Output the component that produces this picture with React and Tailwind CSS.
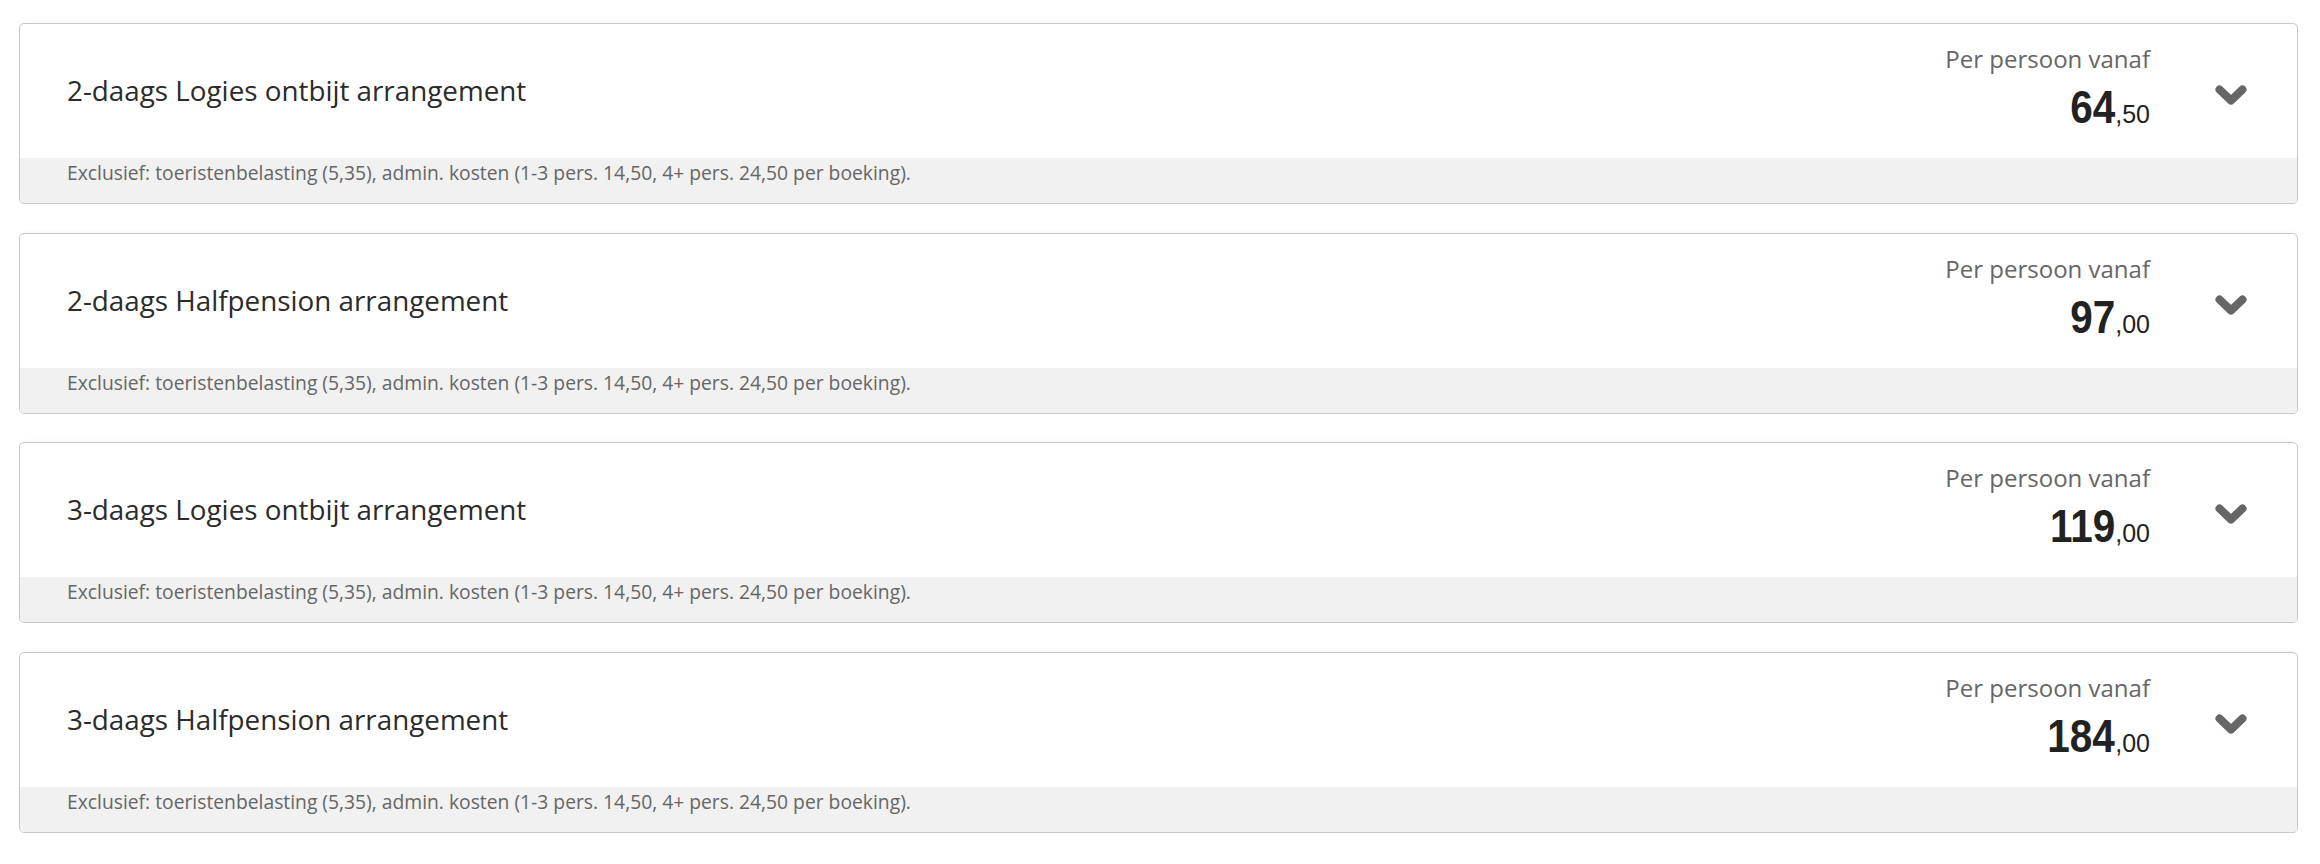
import React from 'react';

const arrangements = [
  { title: '2-daags Logies ontbijt arrangement', euros: '64', cents: '50' },
  { title: '2-daags Halfpension arrangement', euros: '97', cents: '00' },
  { title: '3-daags Logies ontbijt arrangement', euros: '119', cents: '00' },
  { title: '3-daags Halfpension arrangement', euros: '184', cents: '00' },
];

const note =
  'Exclusief: toeristenbelasting (5,35), admin. kosten (1-3 pers. 14,50, 4+ pers. 24,50 per boeking).';

const Chevron = () => (
  <svg width="32" height="21" viewBox="0 0 32 21" className="block">
    <polyline
      points="4.5,4.5 16,15.5 27.5,4.5"
      fill="none"
      stroke="#666666"
      strokeWidth="8"
      strokeLinecap="round"
      strokeLinejoin="round"
    />
  </svg>
);

const ArrangementCard = ({ title, euros, cents }) => (
  <div className="h-[181px] flex flex-col border border-[#c8c8c8] rounded-[5px] bg-white overflow-hidden shadow-[0_-4px_6px_-4px_rgba(0,0,0,0.05)]">
    <div className="h-[134px] flex items-start pl-[47px] pr-[50px]">
      <h3 className="self-center flex-1 pb-[2px] text-[27.8px] leading-[38px] text-[#2b2b2b] font-['Open_Sans',sans-serif] font-normal">
        {title}
      </h3>
      <div className="pt-[19px] text-right">
        <div className="text-[24px] leading-[32px] text-[#666666] font-['Open_Sans',sans-serif]">
          Per persoon vanaf
        </div>
        <div className="mt-[8px] h-[48px] leading-[48px] text-[#222222] font-['Liberation_Sans',Arial,sans-serif] whitespace-nowrap">
          <span className="inline-block text-[46px] font-bold scale-x-[0.88] origin-right">{euros}</span>
          <span className="text-[25px] leading-none">,{cents}</span>
        </div>
      </div>
      <button className="ml-[65px] mt-[61px] p-0 bg-transparent border-0">
        <Chevron />
      </button>
    </div>
    <div className="flex-1 bg-[#f1f1f1] pl-[47px] pt-[3px]">
      <p className="text-[19.3px] leading-[24px] text-[#666666] font-['Open_Sans',sans-serif]">{note}</p>
    </div>
  </div>
);

export default function App() {
  return (
    <div className="min-h-screen bg-white pt-[23px] pl-[19px] pr-[22px] pb-[20px]">
      <div className="flex flex-col gap-[28.7px]">
        {arrangements.map((a) => (
          <ArrangementCard key={a.title} {...a} />
        ))}
      </div>
    </div>
  );
}
